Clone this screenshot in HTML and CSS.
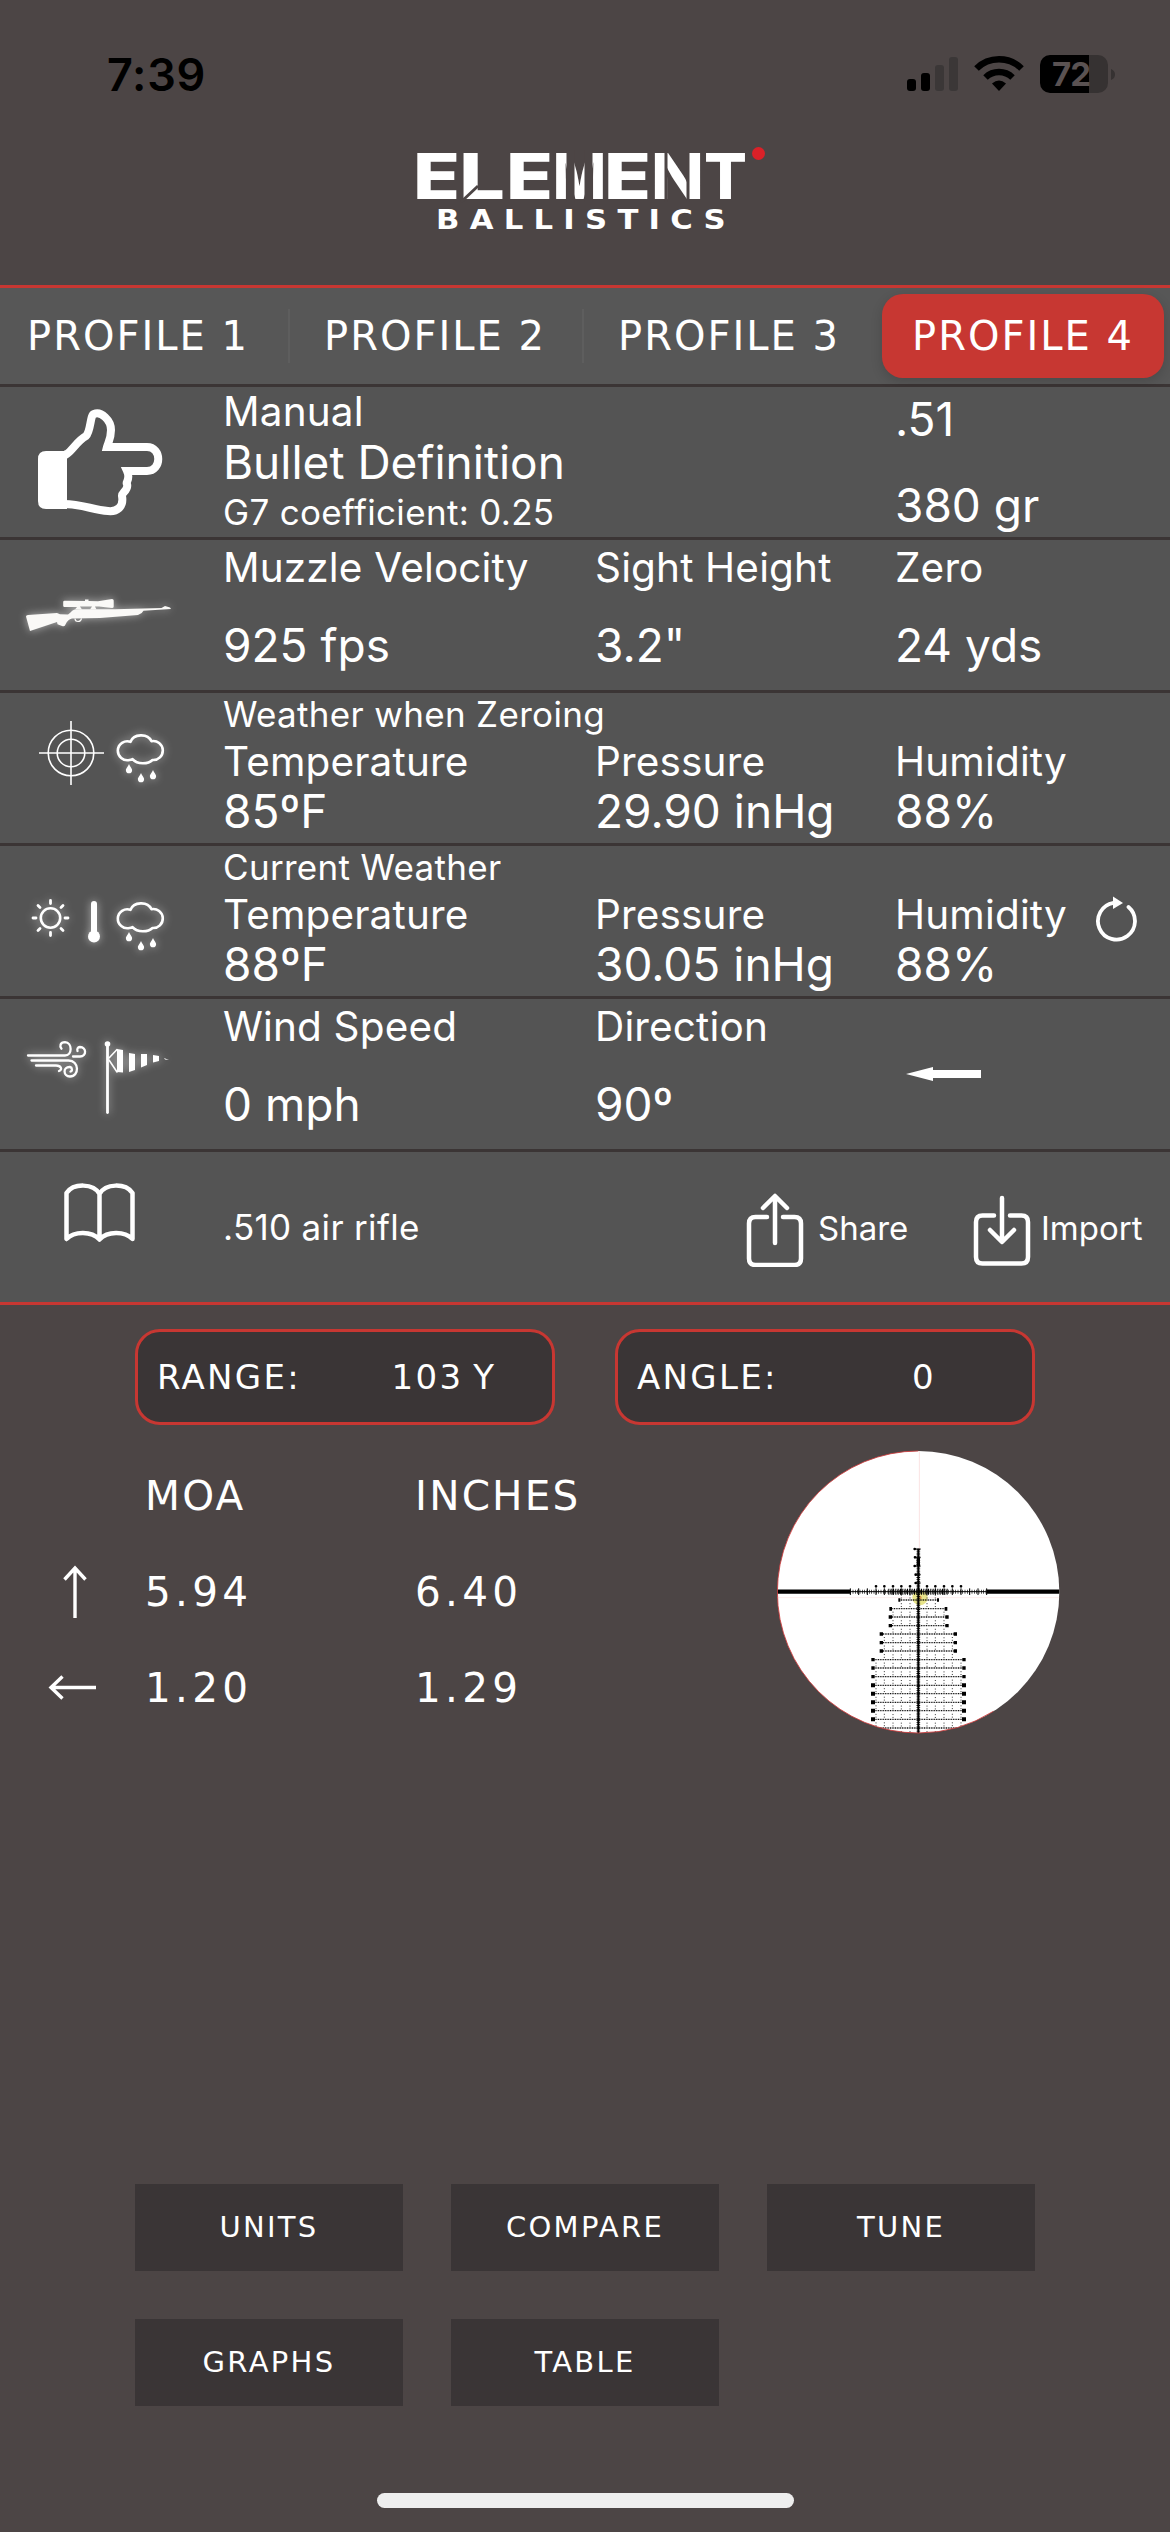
FILE: index.html
```html
<!DOCTYPE html>
<html lang="en">
<head>
<meta charset="utf-8">
<title>Element Ballistics</title>
<link rel="stylesheet" href="styles.css">
</head>
<body>
<svg class="defs" width="0" height="0">
  <defs>
    <g id="rain-cloud">
      <path d="M13 27a9.500 9.500 0 1 1 1-18.200c3-8 17-9 21-.6a9.500 9.500 0 1 1 1 18.800c-4 4-15 5-20-.8q-1.500.8-3 .8z" fill="none" stroke="#fff" stroke-width="2.600" stroke-linejoin="round"/>
      <path d="M12.500 31c1.600 3.500 3.100 4.500 3.100 6.200a3.100 3.100 0 0 1-6.200 0c0-1.700 1.500-2.700 3.100-6.200zM24.500 40c1.600 3.500 3.100 4.500 3.100 6.200a3.100 3.100 0 0 1-6.200 0c0-1.700 1.500-2.700 3.100-6.200zM36.500 37c1.600 3.500 3.100 4.500 3.100 6.200a3.100 3.100 0 0 1-6.200 0c0-1.700 1.500-2.700 3.100-6.200z" fill="#fff"/>
    </g>
  </defs>
</svg>

<header class="top">
  <div class="status">
    <span class="time">7:39</span>
    <svg class="status-icons" width="210" height="40" viewBox="906 54 210 40">
      <rect x="907" y="79" width="9" height="12" rx="3"/>
      <rect x="921" y="73" width="9" height="18" rx="3"/>
      <rect x="935" y="65" width="9" height="26" rx="3" fill="#3b3737"/>
      <rect x="949" y="57" width="9" height="34" rx="3" fill="#3b3737"/>
      <path d="M976.500 68.500a32 32 0 0 1 45 0" fill="none" stroke="#000" stroke-width="6.500"/>
      <path d="M985.500 77.500a19.500 19.500 0 0 1 27 0" fill="none" stroke="#000" stroke-width="6.500"/>
      <path d="M999 91l-7-7.500q7-6 14 0z"/>
      <path d="M1050 55h39v38h-39a10 10 0 0 1-10-10v-18a10 10 0 0 1 10-10z"/>
      <path d="M1089 55h9a10 10 0 0 1 10 10v18a10 10 0 0 1-10 10h-9z" fill="#363232"/>
      <path d="M1111 69q4 1.500 4 5.500t-4 5.500z" fill="#363232"/>
      <text class="battery-level" x="1052" y="86">72</text>
    </svg>
  </div>
  <svg class="logo" width="360" height="120" viewBox="405 125 360 120" role="img" aria-label="Element Ballistics">
    <text class="logo-main" y="199"><tspan x="413" textLength="47" lengthAdjust="spacingAndGlyphs">E</tspan><tspan x="459" textLength="46" lengthAdjust="spacingAndGlyphs">L</tspan><tspan x="506" textLength="47" lengthAdjust="spacingAndGlyphs">E</tspan><tspan x="553" textLength="53" lengthAdjust="spacingAndGlyphs">M</tspan><tspan x="604" textLength="47" lengthAdjust="spacingAndGlyphs">E</tspan><tspan x="651" textLength="53" lengthAdjust="spacingAndGlyphs">N</tspan><tspan x="704" textLength="43" lengthAdjust="spacingAndGlyphs">T</tspan></text>
    <g class="logo-cut">
      <path d="M461 202l17-16" stroke-width="3"/>
      <path d="M570.500 150v52M588.500 150v52" stroke-width="8"/>
      <path d="M666 150v52M688 150v52" stroke-width="3"/>
    </g>
    <text class="logo-sub" x="436" y="229" textLength="300" lengthAdjust="spacingAndGlyphs">BALLISTICS</text>
    <circle cx="758.500" cy="153.500" r="6.500" fill="#da2128"/>
  </svg>
</header>

<nav class="tabs">
  <a class="tab first">PROFILE 1</a><a class="tab divided">PROFILE 2</a><a class="tab divided third">PROFILE 3</a><a class="tab active">PROFILE 4</a>
</nav>

<main>
  <section class="row">
    <div class="icon">
      <svg width="223" height="150" viewBox="0 387 223 150">
        <path d="M46 451h21v58H46q-8 0-8-8v-42q0-8 8-8z" fill="#fff"/>
        <path d="M64 454.500h2C72 451 77 441 86 436C91 431 90 415 94 414C101 411 111 420 111 430C111 439 108 443 107 447H147C162 447 162 471 147 471H127C131 480 125 482 127 484C129 490 121 493 122 496C124 507 117 512 108 511C93 510 82 504 64 504" fill="none" stroke="#fff" stroke-width="8"/>
      </svg>
    </div>
    <div class="cell manual"><p class="label">Manual</p><p class="value">Bullet Definition</p><p class="small">G7 coefficient: 0.25</p></div>
    <div class="cell bullet-size"><p class="value">.51</p><p class="value">380 gr</p></div>
  </section>

  <section class="row">
    <div class="icon">
      <svg class="glow" width="223" height="150" viewBox="0 540 223 150">
        <path d="M28 615L57 612.900L60 614.200L68 614.600C71 613 72 610 75 609.600L80 609.200H115L161.500 608L165 606L170 607.500L171 609L143.500 610.800Q142 614 138 615L100 618L72 618.500C69 619.500 67 621 65.500 624.500Q65 627 62 626L57.500 624.300L57 622L30 631L26 616.500Q26 615.200 28 615z" fill="#faf9f7"/>
        <path d="M75 618.500q0 3 3 3t3.500-3.200" fill="none" stroke="#faf9f7" stroke-width="1.200"/>
        <path d="M64.500 600.700L85 601v-1.500h3.500v1.500L98 601.300L112 599q1.700 0 1.700 1.500v6q0 1.500-1.700 1.500L99 606.500H95l1.500 3H90L92 606.500H80L82 609.500H75L77 607H64.500q-1.300 0-1.300-1.300v-3.700q0-1.300 1.300-1.300z" fill="#faf9f7"/>
      </svg>
    </div>
    <div class="cell pair"><p class="label">Muzzle Velocity</p><p class="value">925 fps</p></div>
    <div class="cell pair"><p class="label">Sight Height</p><p class="value">3.2"</p></div>
    <div class="cell pair"><p class="label">Zero</p><p class="value">24 yds</p></div>
  </section>

  <section class="row weather">
    <div class="icon">
      <svg width="223" height="150" viewBox="0 693 223 150">
        <g fill="none" stroke="#fff" stroke-width="1.600"><circle cx="71" cy="753" r="22.800"/><circle cx="71" cy="753" r="13.800"/><path d="M39 753h65M71 721v64"/></g>
        <use class="glow" href="#rain-cloud" x="116.500" y="733"/>
      </svg>
    </div>
    <p class="small heading">Weather when Zeroing</p>
    <div class="cell"><p class="label">Temperature</p><p class="value">85ºF</p></div>
    <div class="cell"><p class="label">Pressure</p><p class="value">29.90 inHg</p></div>
    <div class="cell"><p class="label">Humidity</p><p class="value">88%</p></div>
  </section>

  <section class="row weather">
    <div class="icon">
      <svg class="glow" width="223" height="150" viewBox="0 846 223 150">
        <circle cx="50.500" cy="918" r="9.700" fill="none" stroke="#fff" stroke-width="2.600"/>
        <path d="M50.500 900.500v3M50.500 932.500v3M33 918h3M65 918h3M38 905.500l2 2M61 928.500l2 2M38 930.500l2-2M61 907.500l2-2" stroke="#fff" stroke-width="2.800" stroke-linecap="round"/>
        <path d="M94 904v30" stroke="#fff" stroke-width="6" stroke-linecap="round"/><circle cx="94" cy="936.500" r="6" fill="#fff"/>
        <use href="#rain-cloud" x="116.500" y="901"/>
      </svg>
    </div>
    <p class="small heading">Current Weather</p>
    <div class="cell"><p class="label">Temperature</p><p class="value">88ºF</p></div>
    <div class="cell"><p class="label">Pressure</p><p class="value">30.05 inHg</p></div>
    <div class="cell with-refresh">
      <div><p class="label">Humidity</p><p class="value">88%</p></div>
      <svg class="refresh" width="44" height="48" viewBox="0 0 44 48">
        <path d="M33.500 12a18.500 18.500 0 1 1-15-4.200" fill="none" stroke="#fff" stroke-width="3.800" stroke-linecap="round"/>
        <path d="M18 1.500l10 6.500-10 6z" fill="#fff"/>
      </svg>
    </div>
  </section>

  <section class="row">
    <div class="icon">
      <svg class="glow" width="223" height="150" viewBox="0 999 223 150">
        <g fill="none" stroke="#fff" stroke-width="2.300" stroke-linecap="round">
          <path d="M28 1055.500h37c7.500 0 7.500-13 0-13.300-5 0-5.500 4-3.500 6.500"/>
          <path d="M31.500 1060.500h37c11 0 11 16 1.500 16-7 0-7.500-10 0-9.500 2.500.5 2.500 4 .5 4.500"/>
          <path d="M36 1065.500h20c5 0 7 4 3 5.500"/>
          <path d="M73 1056.500h7c7 0 6.500-9.500 0-9.500q-3.500.5-2.500 4"/>
          <path d="M107.500 1045v67.500" stroke-width="2.800"/>
          <path d="M109 1058l8-8.500M109 1060l8 12" stroke-width="1.600"/>
        </g>
        <circle cx="107.500" cy="1044" r="2.800" fill="#fff"/>
        <path d="M117 1049l6 1v22.500l-6-.5zM129 1053l6 1v16l-6 2zM141 1054h6v11l-6 2.500zM153 1055l6 1v5l-6 1.500zM164 1058l5 2-4-.5z" fill="#fff"/>
      </svg>
    </div>
    <div class="cell pair"><p class="label">Wind Speed</p><p class="value">0 mph</p></div>
    <div class="cell pair"><p class="label">Direction</p><p class="value">90º</p></div>
    <div class="cell">
      <svg width="100" height="150" viewBox="895 999 100 150"><path d="M906 1074l27-7v3h48v8h-48v3z" fill="#fff"/></svg>
    </div>
  </section>

  <section class="row library">
    <div class="icon">
      <svg width="223" height="150" viewBox="0 1152 223 150">
        <path d="M66.500 1239v-46c7-10 27-10 33 1 6-11 26-11 33-1v46c-8-8-25-8-33 .5-8-8.500-25-8.500-33-.5zM99.500 1194v45" fill="none" stroke="#fff" stroke-width="4.500" stroke-linejoin="round"/>
      </svg>
    </div>
    <p class="small rifle-name">.510 air rifle</p>
    <a class="action">
      <svg width="58" height="74" viewBox="0 0 58 74"><path d="M21 24H9.500Q3 24 3 30.500v35q0 6.500 6.500 6.500h39q6.500 0 6.500-6.500v-35Q55 24 48.500 24H37M29 50V4M17 15L29 3l12 12" class="line"/></svg>
      <span>Share</span>
    </a>
    <a class="action import">
      <svg width="58" height="74" viewBox="0 0 58 74"><path d="M21 22.500H9.500Q3 22.500 3 29v35q0 6.500 6.500 6.500h39q6.500 0 6.500-6.500v-35q0-6.500-6.500-6.500H37M29 5v43M17 37l12 12 12-12" class="line"/></svg>
      <span>Import</span>
    </a>
  </section>
</main>

<div class="inputs">
  <div class="input"><span class="input-name">RANGE:</span><span class="input-value">103<span class="unit">Y</span></span></div>
  <div class="input"><span class="input-name">ANGLE:</span><span class="input-value">0</span></div>
</div>

<section class="solution">
  <div class="holds">
    <span></span><span class="hold head">MOA</span><span class="hold head">INCHES</span>
    <svg width="145" height="96" viewBox="0 1544 145 96"><path d="M75 1618v-50M64.500 1579.500l10.500-11.500 10.500 11.500" class="thin"/></svg>
    <span class="hold">5.94</span><span class="hold">6.40</span>
    <svg width="145" height="96" viewBox="0 1640 145 96"><path d="M96 1687.500H51M62.500 1676.500l-11.500 11 11.500 11" class="thin"/></svg>
    <span class="hold">1.20</span><span class="hold">1.29</span>
  </div>
  <svg class="scope" width="283" height="284" viewBox="51 32 849 852">
    <defs><clipPath id="lens"><circle cx="475" cy="458" r="423"/></clipPath></defs>
    <circle cx="475" cy="458" r="423" fill="#fff"/>
    <g clip-path="url(#lens)">
      <path d="M478 34v300" stroke="#fbe3e3" stroke-width="3"/><path d="M51 475h849" stroke="#fdeeee" stroke-width="3"/>
      <circle cx="480" cy="475" r="23" fill="#e8e48a"/><circle cx="480" cy="475" r="5" fill="#e09a50"/>
      <g stroke="#000" fill="none">
        <path d="M51 457h220M680 457h220" stroke-width="13"/>
        <path d="M271 457h409" stroke-width="3"/>
        <path d="M271 457h409" stroke-width="12" stroke-dasharray="2 5"/>
        <path d="M385 457h180" stroke-width="18" stroke-dasharray="3 4"/>
        <path d="M271 447v20M296 447v20M322 447v20M348 447v20M373 447v20M399 447v20M424 447v20M450 447v20M501 447v20M526 447v20M552 447v20M577 447v20M603 447v20M629 447v20M654 447v20M680 447v20" stroke-width="3"/>
        <path d="M348 441h.1M373 441h.1M399 441h.1M424 441h.1M450 441h.1M501 441h.1M526 441h.1M552 441h.1M577 441h.1M603 441h.1" stroke-width="8" stroke-linecap="round"/>
        <path d="M475 328v556" stroke-width="6"/>
        <path d="M475 330v554" stroke-width="11" stroke-dasharray="2.500 3.900"/>
        <path d="M475 355v25" stroke-width="10"/>
        <path d="M462 329h20M464 354h18M463 380h19M465 406h17M466 431h16" stroke-width="3"/>
        <path d="M464 329h.1M465 354h.1M464 380h.1M467 406h.1M467 431h.1" stroke-width="8" stroke-linecap="round"/>
        <g stroke-width="4" stroke-dasharray="2.800 2.300">
          <path d="M418 482h117M392 508h167M391 533h170M391 559h170M364 584h222M364 610h222M364 635h222M339 661h273M339 686h273M339 712h273M339 738h273M339 763h273M339 789h273M339 814h273M339 840h273M339 866h273"/>
        </g>
        <path d="M418 477v10M534 477v10" stroke-width="6"/>
        <path d="M392 503v11M558 503v11" stroke-width="8"/>
        <path d="M391 528v10M391 554v10M561 528v10M561 554v10M364 579v10M364 605v10M364 630v10M586 579v10M586 605v10M586 630v10M339 656v10M339 681v10M339 707v10M612 656v10M612 681v10M612 707v10" stroke-width="10"/>
        <path d="M339 732v12M339 757v12M339 783v12M339 808v12M339 834v12M612 732v12M612 757v12M612 783v12M612 808v12M612 834v12" stroke-width="12"/>
        <g stroke="#333" stroke-width="3" stroke-dasharray="3 5.500 3 14.100">
          <path d="M424 466v418M450 466v418M501 466v418M526 466v418"/>
          <path d="M399 517v367M552 517v367"/>
          <path d="M373 593v291M577 593v291"/>
          <path d="M348 670v214M603 670v214"/>
        </g>
      </g>
    </g>
    <path d="M475 35A423 423 0 0 0 475 881A423 423 0 0 0 700 816" fill="none" stroke="#d0393a" stroke-width="2.500"/>
  </svg>
</section>

<div class="buttons">
  <a class="button">UNITS</a><a class="button">COMPARE</a><a class="button">TUNE</a><a class="button">GRAPHS</a><a class="button">TABLE</a>
</div>
<div class="home-bar"></div>
</body>
</html>
```
FILE: styles.css
```css
* { box-sizing: border-box; }
body {
  margin: 0;
  width: 1170px;
  height: 2532px;
  display: flex;
  flex-direction: column;
  background: #4c4545;
  color: #fff;
  font-family: Inter, "Liberation Sans", sans-serif;
  overflow: hidden;
}
p { margin: 0; white-space: nowrap; }
svg { display: block; flex: none; }
.defs { position: absolute; }
.glow { filter: drop-shadow(0 0 4px rgba(255, 255, 255, .55)); }
.line { fill: none; stroke: #fff; stroke-width: 4.500; stroke-linecap: round; stroke-linejoin: round; }
.thin { fill: none; stroke: #fff; stroke-width: 3.400; }

.top { height: 288px; border-bottom: 3px solid #c73732; display: flex; flex-direction: column; align-items: center; }
.status { width: 100%; height: 125px; padding: 47px 54px 0 107px; display: flex; justify-content: space-between; }
.time { color: #000; font-size: 45px; font-weight: 600; line-height: 56px; letter-spacing: .7px; }
.status-icons { margin-top: 7px; }
.battery-level { font: 700 33px Inter, sans-serif; fill: #5a5252; letter-spacing: -1px; }
.logo-main { font: 800 63px Inter, sans-serif; fill: #fff; }
.logo-sub { font: 700 27px "DejaVu Sans", sans-serif; fill: #fff; letter-spacing: 9px; }
.logo-cut { stroke: #4c4545; fill: none; }

.tabs {
  height: 99px;
  padding: 6px 6px 6px 0;
  display: grid;
  grid-template-columns: 288px 294px 300px 282px;
  background: #575757;
  border-bottom: 3px solid #3b3535;
  font-family: "DejaVu Sans", sans-serif;
  font-size: 40px;
  letter-spacing: 2px;
}
.tab { height: 84px; line-height: 84px; text-align: center; white-space: nowrap; }
.first { padding-right: 12px; }
.third { padding-right: 6px; }
.divided { background: linear-gradient(#5e5e5e, #5e5e5e) 0 50% / 2px 54px no-repeat; }
.active { background: #c73732; border-radius: 21px; box-shadow: 0 4px 12px rgba(0, 0, 0, .15); }

.row {
  height: 153px;
  display: grid;
  grid-template-columns: 223px 372px 300px 275px;
  background: #545454;
  border-bottom: 3px solid #3b3535;
}
.row:last-child { border-bottom-color: #c73732; }
.cell { display: flex; flex-direction: column; }
.label { font-size: 40.500px; line-height: 46px; letter-spacing: .15px; }
.value { font-size: 46px; line-height: 52px; }
.small { font-size: 35px; line-height: 42px; letter-spacing: .32px; }
.manual { grid-column: 2 / 4; padding-top: 2px; }
.manual .value { line-height: 54px; }
.manual .small { margin-top: 2px; }
.bullet-size { padding-top: 6px; gap: 34px; }
.pair { padding-top: 5px; gap: 28px; }

.weather { grid-template-rows: 46px 104px; }
.weather .icon { grid-row: 1 / 3; }
.heading { grid-column: 2 / 5; }
.with-refresh { flex-direction: row; gap: 28px; }
.refresh { margin-top: 3px; }

.library { grid-template-columns: 223px 523px 227px 197px; }
.rifle-name { padding-top: 54px; }
.action { display: flex; padding-top: 41px; font-size: 33px; line-height: 70px; }
.action span { margin-left: 14px; }
.action.import span { margin-left: 10px; }

.inputs { display: flex; gap: 60px; padding: 24px 135px 0; font-family: "DejaVu Sans", sans-serif; font-size: 34px; letter-spacing: 2.300px; }
.input {
  width: 420px;
  height: 96px;
  padding-left: 19px;
  display: flex;
  align-items: center;
  border: 3px solid #c73732;
  border-radius: 25px;
  background: #3a3536;
}
.input-name { width: 207px; }
.input-value { width: 160px; text-align: center; }
.unit { margin-left: 10px; }

.solution { display: flex; padding-top: 23px; font-family: "DejaVu Sans", sans-serif; }
.holds { width: 777px; display: grid; grid-template-columns: 145px 270px 1fr; grid-template-rows: 96px 96px 96px; }
.hold { font-size: 40.500px; line-height: 96px; letter-spacing: 4.300px; }
.head { letter-spacing: 2.200px; }
.scope { margin-top: 2px; }

.buttons {
  margin-top: auto;
  padding: 0 135px 87px;
  display: grid;
  grid-template-columns: repeat(3, 268px);
  grid-auto-rows: 87px;
  gap: 48px;
  font-family: "DejaVu Sans", sans-serif;
  font-size: 29px;
  letter-spacing: 2.300px;
}
.button { background: #3a3536; line-height: 87px; text-align: center; }
.home-bar { width: 417px; height: 15px; margin: 0 auto 24px; border-radius: 8px; background: #eee; }
```
